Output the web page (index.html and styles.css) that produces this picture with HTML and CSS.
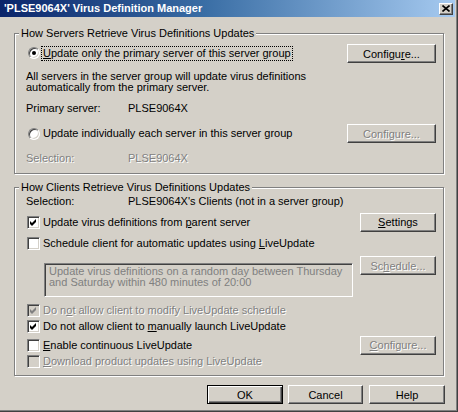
FILE: index.html
```html
<!DOCTYPE html>
<html>
<head>
<meta charset="utf-8">
<link rel="stylesheet" href="styles.css">
</head>
<body>
<div class="window">
  <div class="titlebar">
    <span class="title">'PLSE9064X' Virus Definition Manager</span>
    <span class="close"><svg width="8" height="7" viewBox="0 0 8 7"><path d="M0.5 0.5 L7.5 6.5 M7.5 0.5 L0.5 6.5" stroke="#000" stroke-width="1.6"/></svg></span>
  </div>
  <div class="content">
    <div class="group g1">
      <span class="legend">How Servers Retrieve Virus Definitions Updates</span>
      <div class="row r1">
        <div class="opt"><span class="radio on"></span><span class="lbl focus"><u>U</u>pdate only the primary server of this server group</span></div>
        <button class="btn wide">Configu<u>r</u>e...</button>
      </div>
      <p class="para">All servers in the server group will update virus definitions<br>automatically from the primary server.</p>
      <div class="kv m9"><span class="k">Primary server:</span><span class="v">PLSE9064X</span></div>
      <div class="row r2">
        <div class="opt"><span class="radio"></span><span class="lbl">Update individually each server in this server group</span></div>
        <button class="btn wide dis">Configure...</button>
      </div>
      <div class="kv m9 dis"><span class="k">Selection:</span><span class="v">PLSE9064X</span></div>
    </div>

    <div class="group g2">
      <span class="legend">How Clients Retrieve Virus Definitions Updates</span>
      <div class="kv m7"><span class="k">Selection:</span><span class="v">PLSE9064X's Clients (not in a server group)</span></div>
      <div class="row r3">
        <div class="opt"><span class="cb on"><svg width="11" height="11" viewBox="0 0 11 11"><polygon points="2,4 4,6 8,2 8,5 4,9 2,7" fill="#000"/></svg></span><span class="lbl">Update virus definitions from <u>p</u>arent server</span></div>
        <button class="btn narrow"><u>S</u>ettings</button>
      </div>
      <div class="opt line m6"><span class="cb"></span><span class="lbl">Schedule client for automatic updates using <u>L</u>iveUpdate</span></div>
      <div class="row r4">
        <div class="tbox">Update virus definitions on a random day between Thursday<br>and Saturday within 480 minutes of 20:00</div>
        <button class="btn narrow dis">Sc<u>h</u>edule...</button>
      </div>
      <div class="opt line m7 dis"><span class="cb off"><svg width="11" height="11" viewBox="0 0 11 11"><polygon points="2,4 4,6 8,2 8,5 4,9 2,7" fill="#808080"/></svg></span><span class="lbl">Do n<u>o</u>t allow client to modify LiveUpdate schedule</span></div>
      <div class="opt line m4"><span class="cb on"><svg width="11" height="11" viewBox="0 0 11 11"><polygon points="2,4 4,6 8,2 8,5 4,9 2,7" fill="#000"/></svg></span><span class="lbl">Do not allow client to <u>m</u>anually launch LiveUpdate</span></div>
      <div class="row r5">
        <div class="opt"><span class="cb"></span><span class="lbl"><u>E</u>nable continuous LiveUpdate</span></div>
        <button class="btn narrow dis"><u>C</u>onfigure...</button>
      </div>
      <div class="opt line m1 dis"><span class="cb off"></span><span class="lbl"><u>D</u>ownload product updates using LiveUpdate</span></div>
    </div>

    <div class="footer">
      <button class="btn foot default">OK</button>
      <button class="btn foot cancel">Cancel</button>
      <button class="btn foot help">Help</button>
    </div>
  </div>
</div>
</body>
</html>
```
FILE: styles.css
```css
html, body {
  margin: 0;
  padding: 0;
  background: #d4d0c8;
}
body {
  font-family: "Liberation Sans", Arial, sans-serif;
  font-size: 11px;
  color: #000;
}
.window {
  width: 458px;
  height: 412px;
  box-sizing: border-box;
  background: #d4d0c8;
  border-right: 1px solid #404040;
  border-bottom: 1px solid #404040;
  box-shadow: inset -1px -1px 0 #808080;
  overflow: hidden;
}
.titlebar {
  height: 17px;
  margin-right: 2px;
  box-sizing: border-box;
  padding: 0 2px 0 4px;
  display: flex;
  align-items: center;
  justify-content: space-between;
  background: linear-gradient(to right, #0a246a 0%, #3a6ea5 45%, #a6caf0 100%);
  color: #fff;
  font-weight: bold;
}
.title {
  line-height: 13px;
}
.close {
  width: 14px;
  height: 12px;
  box-sizing: border-box;
  background: #d4d0c8;
  border: 1px solid;
  border-color: #fff #404040 #404040 #fff;
  box-shadow: inset -1px -1px 0 #808080;
  display: flex;
  align-items: center;
  justify-content: center;
}
.close svg { display: block; }
.content {
  padding: 16px 0 0 14px;
}
.group {
  position: relative;
  width: 430px;
  box-sizing: border-box;
  border: 1px solid #808080;
  box-shadow: inset 1px 1px 0 #fff, 1px 1px 0 #fff;
}
.g1 { height: 141px; }
.g2 { height: 189px; margin-top: 13px; }
.legend {
  position: absolute;
  top: -7px;
  left: 4px;
  padding: 0 2px;
  line-height: 13px;
  background: #d4d0c8;
}
.row {
  display: flex;
  align-items: center;
  justify-content: space-between;
  padding-right: 7px;
}
.r1 { margin-top: 9px; height: 20px; }
.r2 { margin-top: 10px; height: 19px; }
.r3 { margin-top: 6px; height: 18px; }
.r4 { margin-top: 7px; height: 41px; align-items: flex-start; }
.r5 { margin-top: 4px; height: 18px; }
.para {
  margin: 8px 0 0 0;
  padding-left: 11px;
  line-height: 11px;
}
.kv {
  display: flex;
  padding-left: 11px;
  height: 12px;
  line-height: 12px;
}
.k { width: 102px; }
.m9 { margin-top: 9px; }
.m7 { margin-top: 7px; }
.m6 { margin-top: 6px; }
.m4 { margin-top: 4px; }
.m1 { margin-top: 1px; }
.opt {
  display: flex;
  align-items: center;
}
.opt.line { height: 12px; }
.lbl {
  border: 1px dotted transparent;
  padding: 0 1px;
  margin-left: 1px;
  line-height: 13px;
}
.lbl.focus { border-color: #000; }
.radio {
  position: relative;
  width: 12px;
  height: 12px;
  margin-left: 13px;
  box-sizing: border-box;
  border-radius: 50%;
  border: 1px solid;
  border-color: #808080 #fff #fff #808080;
  box-shadow: inset 1px 1px 0 #404040, inset -1px -1px 0 #d4d0c8;
  background: #fff;
}
.radio.on::after {
  content: "";
  position: absolute;
  left: 3px;
  top: 3px;
  width: 4px;
  height: 4px;
  border-radius: 50%;
  background: #000;
}
.cb {
  width: 13px;
  height: 13px;
  margin-left: 12px;
  box-sizing: border-box;
  border: 1px solid;
  border-color: #808080 #fff #fff #808080;
  box-shadow: inset 1px 1px 0 #404040, inset -1px -1px 0 #d4d0c8;
  background: #fff;
}
.cb svg { display: block; }
.cb.off { background: #d4d0c8; }
.dis {
  color: #808080;
  text-shadow: 1px 1px 0 #fff;
}
.btn {
  height: 19px;
  box-sizing: border-box;
  padding: 0;
  margin: 0;
  font-family: "Liberation Sans", Arial, sans-serif;
  font-size: 11px;
  color: #000;
  background: #d4d0c8;
  border: 1px solid;
  border-color: #fff #404040 #404040 #fff;
  box-shadow: inset -1px -1px 0 #808080;
  border-radius: 0;
  text-align: center;
}
.btn.dis { color: #808080; text-shadow: 1px 1px 0 #fff; }
.btn.wide { width: 89px; }
.btn.narrow { width: 76px; }
.r1 .btn { margin-top: 1px; }
.tbox {
  margin-top: 7px;
  margin-left: 29px;
  width: 309px;
  height: 34px;
  box-sizing: border-box;
  border: 1px solid;
  border-color: #808080 #fff #fff #808080;
  box-shadow: inset 1px 1px 0 #404040, inset -1px -1px 0 #d4d0c8;
  padding: 2px 4px;
  line-height: 11px;
  color: #808080;
}
.footer {
  width: 431px;
  margin-top: 9px;
  display: flex;
  justify-content: flex-end;
}
.btn.foot { width: 75px; }
.btn.default {
  width: 76px;
  border-color: #000;
  box-shadow: inset 1px 1px 0 #fff, inset -1px -1px 0 #404040, inset -2px -2px 0 #808080;
}
.btn.cancel { margin-left: 5px; }
.btn.help { margin-left: 6px; width: 76px; }
```
